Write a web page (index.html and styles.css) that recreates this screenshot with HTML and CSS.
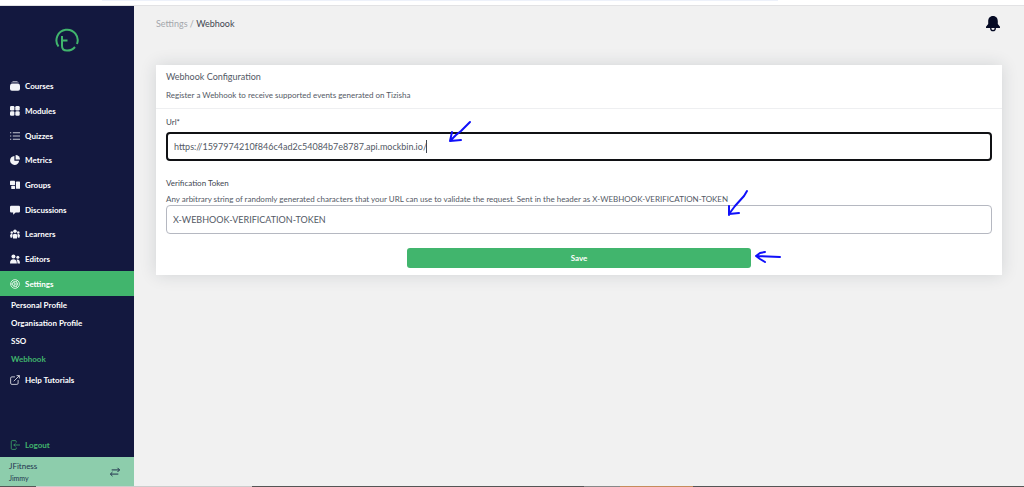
FILE: index.html
```html
<!DOCTYPE html>
<html lang="en">
<head>
    <meta charset="UTF-8">
    <meta name="viewport" content="width=device-width, initial-scale=1.0">
    <title>Webhook</title>
    <link rel="stylesheet" href="styles.css">
</head>
<body>
    <div class="topStrip"></div>
    <div class="app">
        <aside class="sidebar">
            <a href="#" class="logo" aria-label="Home">
                <svg width="24" height="24" viewBox="0 0 24 24" fill="none" stroke="#41b56d" stroke-width="2">
                    <path d="M3.500 18.500A10.600 10.600 0 1 1 22 16"/>
                    <path d="M20 19A10.600 10.600 0 0 1 12 22.600C9 22.600 7 21 7 18V8M7 12.500h5.500"/>
                </svg>
            </a>
            <nav class="menu">
                <a href="#"><svg class="icon" viewBox="0 0 16 16"><path opacity=".6" d="M4 0h8v1.500H4zM2 2.500h12V4H2z"/><rect x="0" y="4.500" width="16" height="11" rx="3"/></svg>Courses</a>
                <a href="#"><svg class="icon" viewBox="0 0 16 16"><rect x="0" y="0" width="7" height="7" rx="2"/><rect x="8.500" y="0" width="7" height="7" rx="2"/><rect x="0" y="8.500" width="7" height="7" rx="2"/><rect x="8.500" y="8.500" width="7" height="7" rx="2"/></svg>Modules</a>
                <a href="#"><svg class="icon" viewBox="0 0 16 16"><path opacity=".8" d="M0 2h2v1.500H0zM4.500 2H16v1.500H4.500zM0 7.200h2v1.500H0zM4.500 7.200H16v1.500H4.500zM0 12.500h2V14H0zM4.500 12.500H16V14H4.500z"/></svg>Quizzes</a>
                <a href="#"><svg class="icon" viewBox="0 0 16 16"><path d="M7 1.500V9h7.500A7.200 7.200 0 1 1 7 1.500z"/><path d="M9 0a7 7 0 0 1 7 7H9z"/></svg>Metrics</a>
                <a href="#"><svg class="icon" viewBox="0 0 16 16"><rect x="0" y="1" width="8" height="7" rx="1"/><rect x="2" y="9" width="6" height="5.500" rx="1"/><rect x="9.500" y="2.500" width="6.500" height="11.500" rx="1"/></svg>Groups</a>
                <a href="#"><svg class="icon" viewBox="0 0 16 16"><path d="M2 1h12a2 2 0 0 1 2 2v7a2 2 0 0 1-2 2H9l-4 3.500V12H2a2 2 0 0 1-2-2V3a2 2 0 0 1 2-2z"/></svg>Discussions</a>
                <a href="#"><svg class="icon" viewBox="0 0 16 16"><circle cx="8" cy="3.500" r="2.800"/><circle cx="2.800" cy="5.500" r="2"/><circle cx="13.200" cy="5.500" r="2"/><path d="M4 11.500a4 4 0 0 1 8 0L11 15H5zM0 10.500C0 8.500 2 7.500 4 8l-1 6H1zM16 10.500c0-2-2-3-4-2.500l1 6h2z"/></svg>Learners</a>
                <a href="#"><svg class="icon" viewBox="0 0 16 16"><circle cx="5.500" cy="4" r="3.200"/><circle cx="12.500" cy="5" r="2.400"/><path d="M0 15c0-4.500 2-6.500 5.500-6.500S11 10.500 11 15zM12 15c0-2.500-.5-4-1.500-6C13.500 8 16 9.500 16 15z"/></svg>Editors</a>
                <a href="#" class="active"><svg class="icon line" viewBox="0 0 16 16"><circle cx="8" cy="8" r="7"/><circle cx="8" cy="8" r="4"/><path d="M8 8h4M8 8 6 4.500M8 8l-2 3.500M1 8h3M11.500 2 10 4.500M11.500 14 10 11.500"/></svg>Settings</a>
            </nav>
            <div class="subMenu">
                <a href="#">Personal Profile</a>
                <a href="#">Organisation Profile</a>
                <a href="#">SSO</a>
                <a href="#" class="current">Webhook</a>
            </div>
            <a href="#" class="help"><svg class="icon line" viewBox="0 0 16 16"><path d="M8 3H3a2 2 0 0 0-2 2v8a2 2 0 0 0 2 2h8a2 2 0 0 0 2-2V8M10.500 1H15v4.500M15 1 6 10"/></svg>Help Tutorials</a>
            <a href="#" class="logout"><svg class="icon line" viewBox="0 0 16 16"><path d="M10 4V2.500A1.500 1.500 0 0 0 8.500 1h-5A1.500 1.500 0 0 0 2 2.500v11A1.500 1.500 0 0 0 3.500 15h5a1.500 1.500 0 0 0 1.500-1.500V12M16 8H6M8.500 5.500 6 8l2.500 2.500"/></svg>Logout</a>
            <div class="account">
                <div>
                    <p class="org">JFitness</p>
                    <p class="user">Jimmy</p>
                </div>
                <button class="switch" aria-label="Switch account">
                    <svg width="10" height="10" viewBox="0 0 12 12" fill="none" stroke="#24344f" stroke-width="1.200"><path d="M2 3.500h9.500M9 1l2.500 2.500L9 6M10 8.500H.5M3 6 .5 8.500 3 11"/></svg>
                </button>
            </div>
        </aside>
        <main class="content">
            <header class="header">
                <div class="breadcrumb"><a href="#">Settings</a> / <span>Webhook</span></div>
                <button class="bell" aria-label="Notifications">
                    <svg width="14" height="16" viewBox="0 0 14 16"><path fill="#050a24" d="M7 0C3.800 0 2.200 2.300 2.200 5.200V8L0 10.800V12h14v-1.200L11.800 8V5.200C11.800 2.300 10.200 0 7 0z"/><path fill="none" stroke="#050a24" stroke-width="1.300" d="M4.700 12a2.300 2.700 0 0 0 4.600 0"/></svg>
                </button>
            </header>
            <section class="card">
                <div class="cardTop">
                    <h1>Webhook Configuration</h1>
                    <p>Register a Webhook to receive supported events generated on Tizisha</p>
                </div>
                <form class="form">
                    <label for="url">Url*</label>
                    <div class="field">
                        <input type="text" id="url" class="focused" value="https://1597974210f846c4ad2c54084b7e8787.api.mockbin.io/">
                        <span class="caret"></span>
                        <svg class="arrow arrowUrl" width="26" height="24" viewBox="0 0 26 24"><path d="M23 2 20 5 14 11 9 15 3 21M5 12 3 21 14 20"/></svg>
                    </div>
                    <label for="token">Verification Token</label>
                    <p class="hint" id="tokenHint">Any arbitrary string of randomly generated characters that your URL can use to validate the request. Sent in the header as X-WEBHOOK-VERIFICATION-TOKEN</p>
                    <div class="field">
                        <input type="text" id="token" aria-describedby="tokenHint" value="X-WEBHOOK-VERIFICATION-TOKEN">
                        <svg class="arrow arrowToken" width="24" height="28" viewBox="0 0 24 28"><path d="M21 2 18 7 9 17 3 25M3 17v9M3 25l10-1"/></svg>
                    </div>
                    <div class="actions">
                        <button type="button" class="save">Save</button>
                        <svg class="arrow arrowSave" width="28" height="14" viewBox="0 0 28 14"><path d="M26 7 3 6M11 2 6 3 2 6l4 3 5 3"/></svg>
                    </div>
                </form>
            </section>
        </main>
    </div>
    <div class="taskbar"></div>
</body>
</html>
```

FILE: styles.css
```css
*{
    margin: 0;
    padding: 0;
    box-sizing: border-box;
}
body{
    min-height: 100vh;
    display: flex;
    flex-direction: column;
    background-color: #f1f1f1;
    color: #535965;
    font-family: Lato, "Liberation Sans", sans-serif;
    font-size: 8px;
    line-height: 12px;
}
a{
    color: inherit;
    text-decoration: none;
}
button{
    border: none;
    background: none;
    font: inherit;
    cursor: pointer;
}
svg{
    display: block;
    flex-shrink: 0;
}
.topStrip{
    height: 6px;
    background: linear-gradient(90deg, transparent 10%, #edf1fa 10%, #edf1fa 76%, transparent 76%) top / 100% 1px no-repeat white;
    border-bottom: 1px solid #e2e2e4;
}
.app{
    flex: 1;
    display: flex;
}
.sidebar{
    width: 134px;
    flex-shrink: 0;
    display: flex;
    flex-direction: column;
    background-color: #13183f;
    color: white;
    font-weight: 700;
}
.logo{
    height: 68px;
    padding-top: 22px;
    display: flex;
    justify-content: center;
}
.menu{
    height: 222px;
    display: grid;
    grid-auto-rows: 1fr;
}
.menu a, .help, .logout{
    display: flex;
    align-items: center;
    gap: 5px;
    padding-left: 10px;
}
.menu .active{
    background-color: #41b56d;
}
.icon{
    width: 10px;
    height: 10px;
    fill: #f3f4f8;
}
.line{
    fill: none;
    stroke: currentColor;
    stroke-width: 1.2;
}
.subMenu a{
    display: block;
    padding-left: 11px;
    line-height: 18px;
}
.subMenu .current, .logout{
    color: #41b56d;
}
.help{
    height: 24px;
}
.logout{
    height: 24px;
    margin-top: auto;
}
.account{
    display: flex;
    justify-content: space-between;
    align-items: center;
    height: 29px;
    padding: 0 14px 0 9px;
    background-color: #8dcdac;
    color: #24344f;
    font-weight: 400;
}
.user{
    font-size: 7px;
}
.content{
    flex: 1;
    padding: 0 22px;
}
.header{
    height: 36px;
    display: flex;
    justify-content: space-between;
    align-items: center;
    color: #a4a7ac;
    font-size: 9px;
}
.breadcrumb span{
    color: #414752;
}
.bell{
    padding-right: 2px;
}
.card{
    margin-top: 23px;
    background-color: white;
    box-shadow: 0 0 16px rgba(30, 40, 60, 0.14);
}
.cardTop{
    height: 44px;
    padding: 6px 10px;
    border-bottom: 1px solid #eeeff1;
}
.cardTop h1{
    font-size: 9px;
    font-weight: 400;
    margin-bottom: 6px;
}
.form{
    padding: 5px 10px 7px;
}
.form label{
    display: block;
    padding: 2px 0 4px;
    color: #414752;
}
.field{
    position: relative;
    margin-bottom: 14px;
}
.form input{
    display: block;
    width: 100%;
    height: 29px;
    padding: 0 6px;
    border: 1px solid #b5b8c1;
    border-radius: 4px;
    background-color: white;
    color: #535965;
    font: inherit;
    font-size: 9px;
    outline: none;
}
.form .focused{
    border: 2px solid #101114;
}
/* text cursor at the end of the url */
.caret{
    position: absolute;
    left: 260px;
    top: 8px;
    width: 1px;
    height: 13px;
    background-color: #414752;
}
.actions{
    position: relative;
    display: flex;
    justify-content: center;
}
.save{
    width: 344px;
    height: 20px;
    border-radius: 3px;
    background-color: #41b56d;
    color: white;
    font-weight: 700;
}
/* hand drawn pointers */
.arrow{
    position: absolute;
    fill: none;
    stroke: #1010fa;
    stroke-width: 2;
    stroke-linecap: round;
    stroke-linejoin: round;
}
.arrowUrl{
    left: 281px;
    top: -12px;
}
.arrowToken{
    left: 560px;
    top: -16px;
}
.arrowSave{
    left: calc(50% + 175px);
    top: 2px;
}
.taskbar{
    height: 1px;
    background: linear-gradient(90deg, #555 36px, #ccc 36px, #ccc 252px, #555 252px, #555 584px, #888 584px, #888 620px, #c58c5c 620px, #c58c5c 693px, #555 693px);
}
```
